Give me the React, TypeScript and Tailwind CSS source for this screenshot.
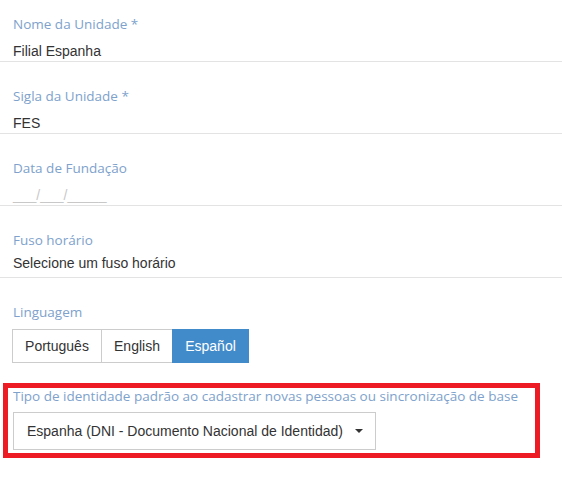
import React from "react";

const labelCls =
  "block text-[13.5px] leading-[20px] text-[#7ea2cc] font-['Open_Sans',sans-serif]";
const valueCls =
  "text-[14px] leading-[20px] text-[#333] font-['Liberation_Sans',Arial,sans-serif]";

function Field({
  label,
  value,
  first,
  placeholder,
  select,
}: {
  label: string;
  value: string;
  first?: boolean;
  placeholder?: boolean;
  select?: boolean;
}) {
  return (
    <div
      className={`${first ? "pt-[14px]" : "pt-[24px]"} ${select ? "pb-[4px]" : ""} pl-[12px] border-b border-[#e3e3e3]`}
    >
      <div className="pl-px">
        <label className={labelCls}>{label}</label>
        <div
          className={`${valueCls} ${select ? "mt-[3px]" : "mt-[7px]"} ${placeholder ? "text-[#c8c8c8]" : ""}`}
        >
          {value}
        </div>
      </div>
    </div>
  );
}

export default function App() {
  return (
    <div className="relative w-[562px] h-[481px] bg-white overflow-hidden font-['Liberation_Sans',Arial,sans-serif]">
      <Field first label="Nome da Unidade *" value="Filial Espanha" />
      <Field label="Sigla da Unidade *" value="FES" />
      <Field label="Data de Fundação" value="___/___/_____" placeholder />
      <Field label="Fuso horário" value="Selecione um fuso horário" select />

      <div className="pt-[24px] pl-[12px]">
        <label className={`${labelCls} pl-px`}>Linguagem</label>
        <div className="mt-[7px] flex h-[34px] text-[14px] font-['Liberation_Sans',Arial,sans-serif]">
          <button className="w-[90px] h-full border border-[#cccccc] bg-white text-[#333] flex items-center justify-center">
            Português
          </button>
          <button className="-ml-px w-[72px] h-full border border-[#cccccc] bg-white text-[#333] flex items-center justify-center">
            English
          </button>
          <button className="-ml-px w-[77px] h-full border border-[#428bca] bg-[#428bca] text-white flex items-center justify-center">
            Español
          </button>
        </div>

        <label className={`${labelCls} pl-px mt-[23px]`}>
          Tipo de identidade padrão ao cadastrar novas pessoas ou sincronização de base
        </label>
        <div className="mt-[6px] ml-px w-[363px] h-[38px] border border-[#cccccc] flex items-center pl-[13px] pr-[12px] text-[14px] text-[#333]">
          <span className="flex-1">Espanha (DNI - Documento Nacional de Identidad)</span>
          <span className="w-0 h-0 border-l-[4px] border-r-[4px] border-t-[4px] border-l-transparent border-r-transparent border-t-[#333]" />
        </div>
      </div>

      <div className="absolute left-[3px] top-[383px] w-[537px] h-[75px] border-[5px] border-[#ed1c24] pointer-events-none" />
    </div>
  );
}
